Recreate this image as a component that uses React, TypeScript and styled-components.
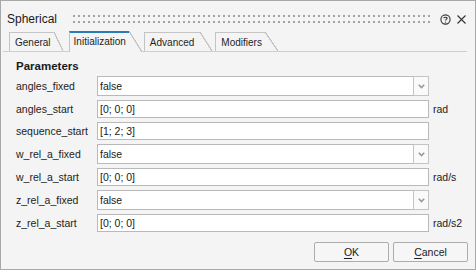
import React from 'react';
import styled, { createGlobalStyle } from 'styled-components';

const GlobalStyle = createGlobalStyle`
  html, body {
    margin: 0;
    padding: 0;
    background: #f4f4f4;
  }
  * {
    box-sizing: border-box;
  }
`;

const Window = styled.div`
  width: 476px;
  height: 270px;
  border: 1px solid #a8a8a8;
  background: #f4f4f4;
  display: flex;
  flex-direction: column;
  font-family: 'Liberation Sans', Arial, sans-serif;
  color: #1e1e1e;
  -webkit-font-smoothing: antialiased;
`;

const TitleBar = styled.div`
  height: 30px;
  padding: 6px 9px 0 6px;
  display: flex;
  align-items: center;
`;

const Title = styled.div`
  font-size: 12px;
  color: #1a1a1a;
`;

const Grip = styled.div`
  flex: 1;
  height: 8px;
  margin: 0 10px 0 16px;
  background-image:
    linear-gradient(90deg, #a3a3a3 2px, transparent 2px),
    linear-gradient(90deg, #a3a3a3 2px, transparent 2px);
  background-size: 5px 2px, 5px 2px;
  background-position: 0 0, 0 6px;
  background-repeat: repeat-x;
`;

const TitleIcons = styled.div`
  display: flex;
  align-items: center;
  gap: 6px;
`;

const TabStrip = styled.div`
  height: 21px;
  margin: 0 8px 0 2px;
  padding-left: 6px;
  border-bottom: 1px solid #cfcfcf;
  display: flex;
  align-items: flex-end;
`;

const Tab = styled.div<{ $active?: boolean; $slant: number; $gap: number; $padRight: number }>`
  position: relative;
  height: ${({ $active }) => ($active ? '21px' : '19px')};
  margin-bottom: ${({ $active }) => ($active ? '-1px' : '0')};
  margin-right: ${({ $slant, $gap }) => $slant + $gap}px;
  padding: ${({ $active, $padRight }) => ($active ? `2px ${$padRight}px 0 4px` : `3px ${$padRight}px 0 5px`)};
  border-left: 1px solid #c4c4c4;
  border-top: ${({ $active }) => ($active ? '2px solid #2a7bb6' : '1px solid #c4c4c4')};
  background: #f4f4f4;
  font-size: 10px;
  line-height: 13px;
  color: #1e1e1e;
  z-index: ${({ $active }) => ($active ? 1 : 0)};

  &::after {
    content: '';
    position: absolute;
    left: 100%;
    top: ${({ $active }) => ($active ? '-2px' : '-1px')};
    bottom: 0;
    width: ${({ $slant }) => $slant}px;
    background: linear-gradient(
      to top right,
      #f4f4f4 calc(50% - 0.8px),
      #c4c4c4 calc(50% - 0.5px),
      #c4c4c4 calc(50% + 0.5px),
      transparent calc(50% + 0.8px)
    );
  }
`;

const Panel = styled.div`
  flex: 1;
  padding: 7px 7px 7px 15px;
  display: flex;
  flex-direction: column;
`;

const SectionTitle = styled.div`
  font-size: 11.5px;
  font-weight: 700;
  line-height: 14px;
  color: #1a1a1a;
`;

const ParamGrid = styled.div`
  margin-top: 3px;
  display: grid;
  grid-template-columns: 77px 332px auto;
  column-gap: 4px;
  row-gap: 4px;
  align-items: center;
`;

const Label = styled.div`
  font-size: 10.5px;
  color: #222;
  white-space: nowrap;
`;

const TextField = styled.div`
  height: 18px;
  border: 1px solid #b9b9b9;
  background: #fff;
  padding: 0 2px;
  font-size: 10.5px;
  line-height: 16px;
  color: #1a1a1a;
`;

const Combo = styled.div`
  height: 20px;
  display: flex;
  background: #fff;
`;

const ComboValue = styled.div`
  flex: 1;
  border: 1px solid #b9b9b9;
  border-right: none;
  padding: 0 2px;
  font-size: 10.5px;
  line-height: 18px;
  color: #1a1a1a;
`;

const ComboButton = styled.div`
  width: 16px;
  border: 1px solid #c4c4c4;
  background: #fafafa;
  display: flex;
  align-items: center;
  justify-content: center;
`;

const Unit = styled.div`
  font-size: 10.5px;
  color: #1a1a2a;
  white-space: nowrap;
`;

const Footer = styled.div`
  margin-top: 10px;
  display: flex;
  justify-content: flex-end;
  gap: 4px;
`;

const Button = styled.button`
  width: 75px;
  height: 20px;
  padding: 0;
  border: 1px solid #adadad;
  border-radius: 2px;
  background: #f6f6f6;
  font-family: inherit;
  font-size: 10.5px;
  color: #1a1a1a;
  u {
    text-underline-offset: 2px;
  }
`;

const HelpIcon = () => (
  <svg width="11" height="11" viewBox="0 0 11 11">
    <circle cx="5.5" cy="5.5" r="4.6" fill="none" stroke="#333" strokeWidth="1.1" />
    <path d="M3.9 4.3 C3.9 2.9 7.1 2.9 7.1 4.3 C7.1 5.3 5.5 5.4 5.5 6.5" fill="none" stroke="#333" strokeWidth="1.1" />
    <circle cx="5.5" cy="8.1" r="0.7" fill="#333" />
  </svg>
);

const CloseIcon = () => (
  <svg width="9" height="9" viewBox="0 0 9 9">
    <path d="M0.5 0.5 L8.5 8.5 M8.5 0.5 L0.5 8.5" stroke="#333" strokeWidth="1.1" />
  </svg>
);

const ChevronDown = () => (
  <svg width="7" height="5" viewBox="0 0 7 5">
    <path d="M0.8 0.8 L3.5 3.6 L6.2 0.8" fill="none" stroke="#9a9a9a" strokeWidth="1.6" />
  </svg>
);

type Param = { name: string; value: string; kind: 'combo' | 'text'; unit?: string };

const params: Param[] = [
  { name: 'angles_fixed', value: 'false', kind: 'combo' },
  { name: 'angles_start', value: '[0; 0; 0]', kind: 'text', unit: 'rad' },
  { name: 'sequence_start', value: '[1; 2; 3]', kind: 'text' },
  { name: 'w_rel_a_fixed', value: 'false', kind: 'combo' },
  { name: 'w_rel_a_start', value: '[0; 0; 0]', kind: 'text', unit: 'rad/s' },
  { name: 'z_rel_a_fixed', value: 'false', kind: 'combo' },
  { name: 'z_rel_a_start', value: '[0; 0; 0]', kind: 'text', unit: 'rad/s2' },
];

const tabs = [
  { label: 'General', slant: 9, gap: 6, padRight: 3 },
  { label: 'Initialization', slant: 13, gap: 2, padRight: 3, active: true },
  { label: 'Advanced', slant: 12, gap: 3, padRight: 6 },
  { label: 'Modifiers', slant: 13, gap: 0, padRight: 3 },
];

export default function App() {
  return (
    <>
      <GlobalStyle />
      <Window>
        <TitleBar>
          <Title>Spherical</Title>
          <Grip />
          <TitleIcons>
            <HelpIcon />
            <CloseIcon />
          </TitleIcons>
        </TitleBar>

        <TabStrip>
          {tabs.map((t) => (
            <Tab
              key={t.label}
              $active={t.active}
              $slant={t.slant}
              $gap={t.gap}
              $padRight={t.padRight}
            >
              {t.label}
            </Tab>
          ))}
        </TabStrip>

        <Panel>
          <SectionTitle>Parameters</SectionTitle>
          <ParamGrid>
            {params.map((p) => (
              <React.Fragment key={p.name}>
                <Label>{p.name}</Label>
                {p.kind === 'combo' ? (
                  <Combo>
                    <ComboValue>{p.value}</ComboValue>
                    <ComboButton>
                      <ChevronDown />
                    </ComboButton>
                  </Combo>
                ) : (
                  <TextField>{p.value}</TextField>
                )}
                <Unit>{p.unit ?? ''}</Unit>
              </React.Fragment>
            ))}
          </ParamGrid>

          <Footer>
            <Button>
              <u>O</u>K
            </Button>
            <Button>
              <u>C</u>ancel
            </Button>
          </Footer>
        </Panel>
      </Window>
    </>
  );
}
